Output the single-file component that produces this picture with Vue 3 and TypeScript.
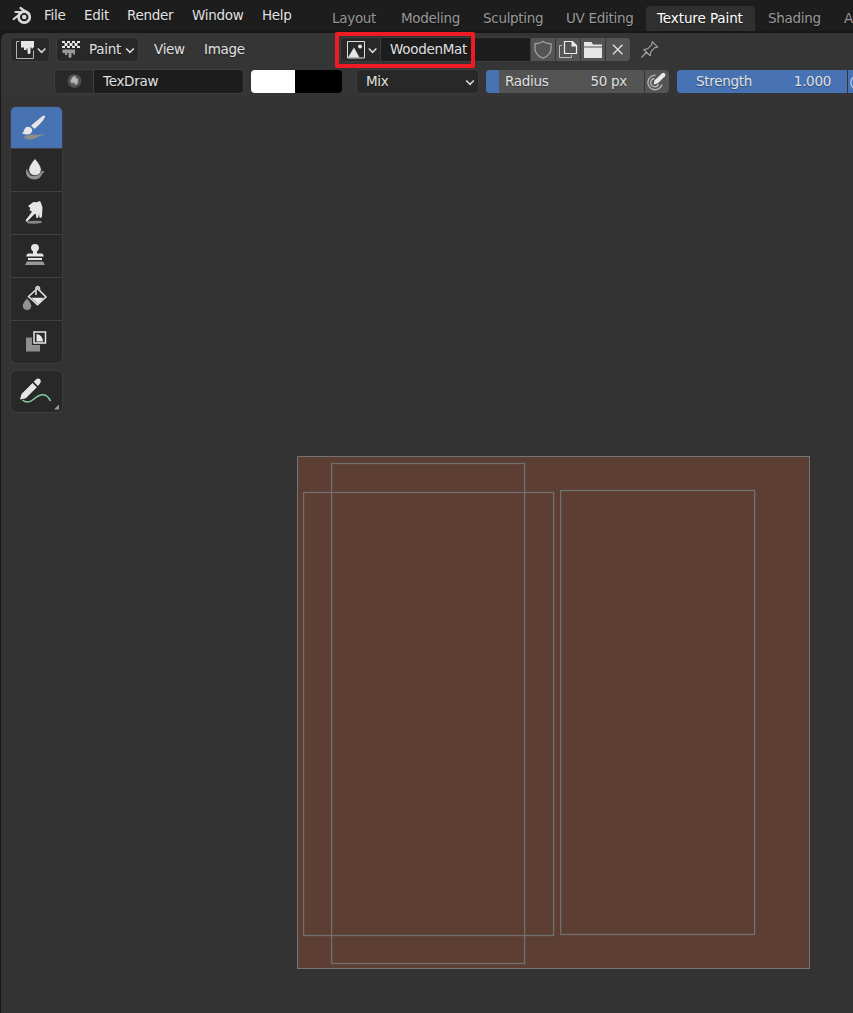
<script setup lang="ts">
interface Label { text: string; width: number }

const menus: Label[] = [
  { text: 'File', width: 40 },
  { text: 'Edit', width: 43 },
  { text: 'Render', width: 65 },
  { text: 'Window', width: 70 },
  { text: 'Help', width: 59 },
]
const tabs: Label[] = [
  { text: 'Layout', width: 69 },
  { text: 'Modeling', width: 82 },
  { text: 'Sculpting', width: 83 },
  { text: 'UV Editing', width: 91 },
  { text: 'Texture Paint', width: 111 },
  { text: 'Shading', width: 76 },
  { text: 'Animation', width: 95 },
]
const tools: string[] = ['draw', 'soften', 'smear', 'clone', 'fill', 'mask']
const px = (n: number) => ({ width: n + 'px' })
</script>

<template>
  <div class="window">
    <header class="topbar">
      <svg class="logo" width="44" height="31" viewBox="0 0 44 31">
        <g fill="none" stroke="#d9d9d9" stroke-linecap="round" stroke-linejoin="round">
          <circle cx="24.2" cy="17" r="5.600" stroke-width="2.700" />
          <path d="M15.500 12h9M20.500 8l8.500 6M13.700 19l9-7" stroke-width="2.200" />
        </g>
        <circle cx="24.200" cy="17" r="2.300" fill="#d9d9d9" />
      </svg>
      <nav class="menus">
        <span v-for="m in menus" :key="m.text" :style="px(m.width)">{{ m.text }}</span>
      </nav>
      <nav class="tabs">
        <span v-for="t in tabs" :key="t.text" class="tab" :style="px(t.width)"><span :class="{ active: t.text === 'Texture Paint' }">{{ t.text }}</span></span>
      </nav>
    </header>

    <main class="editor">
      <div class="row header-row">
        <div class="box editor-type">
          <svg width="38" height="24" viewBox="0 0 38 24">
            <path d="M8.500 4.500h-3v17h17v-8" fill="none" stroke="#b4b4b4" />
            <path d="M10 4h13v6.500h-1v1h-1.500v-1h-1v5q0 1.500-1.500 1.500t-1.500-1.500V11.500h-1V13h-2.500v-2.500H10z" fill="#e6e6e6" />
            <path d="M26.800 11.500l3.800 3.800 3.800-3.800" fill="none" stroke="#d8d8d8" stroke-width="1.600" />
          </svg>
        </div>
        <div class="box mode">
          <svg width="31" height="24" viewBox="0 0 31 24">
            <path d="M5 4h3v2H5zm5 0h3v2h-3zm5 0h3v2h-3zm5 0h3v2h-3zM7.500 6h3v3h-3zm5 0h3v3h-3zm5 0h3v3h-3zM5 9h3v2H5zm5 0h3v2h-3zm5 0h3v2h-3zm5 0h3v2h-3z" fill="#e6e6e6" />
            <path d="M5.500 12.500h12.500v5h-2v-1.500h-1.500V20q-1.500 2-3 0v-4h-1.500v2h-2v-2h-2.500z" fill="#999" />
          </svg>
          <span class="mode-name">Paint</span>
          <svg width="16" height="24" viewBox="0 0 16 24"><path d="M4.200 11.500l3.800 3.800 3.800-3.800" fill="none" stroke="#d8d8d8" stroke-width="1.600" /></svg>
        </div>
        <span class="view">View</span>
        <span class="image">Image</span>
        <div class="image-select">
          <div class="box browse">
            <svg width="39" height="24" viewBox="0 0 39 24">
              <path d="M6.500 4.500h17v16.500h-17z" fill="none" stroke="#dedede" />
              <path d="M7 20.500L13 10.500l5.500 10z" fill="#e6e6e6" /><circle cx="19" cy="9.500" r="2" fill="#e6e6e6" />
              <path d="M27.800 11.500l3.800 3.800 3.800-3.800" fill="none" stroke="#d8d8d8" stroke-width="1.600" />
            </svg>
          </div>
          <div class="field image-name">WoodenMat</div>
          <div class="button"><svg width="24" height="24" viewBox="0 0 24 24"><path d="M12 4.500l3 1.500 5 .8v5q0 6-8 9.500-8-3.500-8-9.500v-5L9 6z" fill="none" stroke="#a6a6a6" stroke-width="1.200" /></svg></div>
          <div class="button"><svg width="24" height="24" viewBox="0 0 24 24"><path d="M6 8.500H3.500v12h12V18" fill="none" stroke="#bcbcbc" /><path d="M8.500 4.500h8l4 4v8h-12z" fill="none" stroke="#ededed" stroke-width="1.200" /><path d="M15.500 4v5.500H21z" fill="#eee" /></svg></div>
          <div class="button"><svg width="24" height="24" viewBox="0 0 24 24"><path d="M3 5h7.500L12 7.500h9v2H3zM3 10.500h18V21H3z" fill="#e6e6e6" /></svg></div>
          <div class="button last"><svg width="24" height="24" viewBox="0 0 24 24"><path d="M7 7.700l9.500 9.500M16.500 7.700L7 17.200" stroke="#dedede" stroke-width="1.400" /></svg></div>
        </div>
        <svg class="pin" width="20" height="24" viewBox="0 0 20 24">
          <path d="M.500 20.500l5.500-6M2.800 12.500l6.400 6.200.8-4.200 3.700-3.800 3-.5-5.500-5.500-.6 3.200-3.700 3.700z" fill="none" stroke="#9d9d9d" stroke-width="1.200" stroke-linejoin="round" />
        </svg>
      </div>

      <div class="row settings-row">
        <div class="brush">
          <div class="box brush-icon">
            <svg width="38" height="24" viewBox="0 0 38 24">
              <defs><radialGradient id="ball"><stop offset="0" stop-color="#808080" /><stop offset=".7" stop-color="#555" /><stop offset="1" stop-color="#484848" /></radialGradient></defs>
              <circle cx="19.500" cy="12" r="7" fill="url(#ball)" />
              <path d="M15.500 11.500l2.500-4 3-.5-.5 2 2.500 1-.3 4.500-2.200 1.500-1.500-2.800-2.500 1z" fill="#c4c4c4" opacity=".85" />
            </svg>
          </div>
          <div class="field brush-name">TexDraw</div>
        </div>
        <div class="colors"><i class="white" /><i class="black" /></div>
        <div class="box blend">
          <span>Mix</span>
          <svg width="16" height="24" viewBox="0 0 16 24"><path d="M4.200 11.500l3.800 3.800 3.800-3.800" fill="none" stroke="#d8d8d8" stroke-width="1.600" /></svg>
        </div>
        <div class="slider radius"><i class="level" /><span>Radius</span><b>50 px</b></div>
        <div class="button pressure">
          <svg width="24" height="24" viewBox="0 0 24 24">
            <path d="M10.500 6.300A7.200 7.200 0 1 0 17 15.500M9.500 9.700A4 4 0 1 0 13.500 15" fill="none" stroke="#b5b5b5" stroke-width="1.400" />
            <path d="M8.500 15.500l1.200-4.300 7.300-7q1.500-1 2.800.300 1.200 1.300.2 2.800l-7.200 7z" fill="#eaeaea" />
          </svg>
        </div>
        <div class="slider strength"><span>Strength</span><b>1.000</b></div>
        <div class="button strength-pressure">
          <svg width="24" height="24" viewBox="0 0 24 24"><path d="M10.500 6.300A7.200 7.200 0 1 0 17 15.500M9.500 9.700A4 4 0 1 0 13.500 15" fill="none" stroke="#b5c0d6" stroke-width="1.400" /></svg>
        </div>
      </div>

      <div class="workspace">
        <aside class="toolbar">
          <div class="tool-group">
            <div v-for="t in tools" :key="t" class="tool" :class="{ selected: t === 'draw' }">
              <svg width="51" height="42" viewBox="0 0 51 42">
                <g v-if="t === 'draw'">
                  <path d="M13 29.800q5-2.600 9.500-2.300 5 1.200 10.500-.7.700 1-3 2-3 1-5 2.200-3.500 2-8.500 1.200-3.500-.7-3.500-2.400z" fill="#8e8e8e" />
                  <path d="M20 18.500L31 9.500q3-2 3 .2Q32 15 23.300 22z" fill="#e6e6e6" />
                  <path d="M11 26.500q1.700-.7 2-3.200 1.500-4.300 5.500-3.300 3.500 1.500 2.500 4.500-2 4.500-10 2z" fill="#e6e6e6" />
                </g>
                <g v-else-if="t === 'soften'">
                  <path d="M15.200 19.500Q18 24 19.500 26.500q4 1.500 8-2.500 2.500-2.500 5.500-2 .2 2-2 3-1.500 5-7 5.600Q15 30 15 23z" fill="#929292" />
                  <path d="M24 9.500q6 7 6.300 11-.3 6-6.300 6t-6.300-6Q18 16.500 24 9.500z" fill="#e6e6e6" stroke="#282828" stroke-width=".7" />
                </g>
                <g v-else-if="t === 'smear'">
                  <path d="M16 29.500q6-1.200 14.500-.5v2q-7 1.300-14.500.3z" fill="#888" />
                  <path d="M17 14l5.500-4 3 .3L29 9l1.200 2.500 1.300 4-.6 9.500-1.500 1-1-.5-.4-3.500-1 4-1.800-.2-.4-4-1.800.7-6.500 6.700-1.800.6.300-2 6-8-2.500-1.700.8-2z" fill="#e6e6e6" />
                </g>
                <g v-else-if="t === 'clone'">
                  <path d="M24 9a4 4 0 0 1 4 4q0 2-2 3.500v2h5q1.700 1 1.700 3H15.300q0-2 1.700-3h5v-2Q20 15 20 13a4 4 0 0 1 4-4z" fill="#e6e6e6" />
                  <path d="M17 23h14v2H17z" fill="#e6e6e6" /><path d="M16 26.500h16l2 3.500H14z" fill="#999" />
                </g>
                <g v-else-if="t === 'fill'">
                  <path d="M16 20.500q4 4.500 4.300 7-.3 4.500-4.300 4.500t-4.300-4.500q.3-2.500 4.300-7z" fill="#929292" />
                  <path d="M17.500 18.500l9-8L35 19l-8.500 7.800z" fill="none" stroke="#e6e6e6" stroke-width="1.500" />
                  <path d="M20.500 19.700h12L27 26z" fill="#e6e6e6" />
                  <path d="M25 17V9.800q1.700-2.300 3.400 0v2.700" fill="none" stroke="#d0d0d0" stroke-width="1.700" />
                </g>
                <g v-else>
                  <path d="M15 16.500h6V24h8v6.500H15z" fill="#8e8e8e" />
                  <path d="M23 11h11.500v11H23z" fill="#292929" stroke="#e6e6e6" stroke-width="1.500" />
                  <path d="M25.500 20.500v-7.400q6 1 6.500 7.400z" fill="#e6e6e6" />
                </g>
              </svg>
            </div>
          </div>
          <div class="annotate">
            <svg width="51" height="42" viewBox="0 0 51 42">
              <path d="M11.500 29C15 32 19 31.500 23 28S31 22.500 35 24.500Q38.500 27 39.500 30" fill="none" stroke="#82d0a2" stroke-width="1.500" />
              <path d="M9 28.500l1.500-5.500L21.500 12l4.300 4.300-11 10.900zM22.700 10.800l2.800-2.800q2-1.200 3.500.3 1.700 1.700.3 3.700L27 15z" fill="#e6e6e6" />
              <path d="M48 33.500v5h-5z" fill="#9a9a9a" />
            </svg>
          </div>
        </aside>
        <svg class="canvas" width="513" height="513" viewBox="0 0 513 513">
          <rect x=".5" y=".5" width="512" height="512" fill="#5c3e32" stroke="#747474" />
          <g fill="none" stroke="#707070" stroke-width="1.300">
            <rect x="34.600" y="7.500" width="193" height="500" />
            <rect x="6.600" y="36.500" width="250" height="443" />
            <rect x="263.600" y="34.500" width="194" height="444" />
          </g>
        </svg>
      </div>
    </main>

    <div class="highlight" />
  </div>
</template>

<style>
body { background: #1a1a1a; overflow: hidden; }
</style>

<style scoped>
* { box-sizing: border-box; }
.window {
  position: relative; width: 853px; height: 1013px; overflow: hidden; background: #181818;
  color: #e0e0e0; font: 13.5px/24px "DejaVu Sans", sans-serif; letter-spacing: -.3px;
  text-shadow: 0 1px 1px rgba(0, 0, 0, .35); white-space: nowrap;
}
svg { display: block; flex: none; }
.topbar { display: flex; height: 31px; background: #1d1d1d; }
.menus { display: flex; flex: none; padding-top: 3px; }
.menus span { flex: none; }
.tabs { display: flex; flex: none; padding-top: 6px; color: #989898; }
.tab { flex: none; height: 25px; padding-left: 11px; }
.active { display: block; width: 109px; height: 25px; margin-left: -11px; padding-left: 11px; border-radius: 4px 4px 0 0; background: #303030; color: #fff; letter-spacing: -.1px; }
.editor { margin: 2px 0 0 1px; height: 980px; background: #333; border-radius: 7px 0 0 0; overflow: hidden; }
.row { display: flex; height: 32px; background: #353535; }
.row svg { margin-top: -1px; }
.header-row { padding: 5px 0 0 10px; line-height: 22px; }
.settings-row { padding: 5px 0 0 54px; line-height: 22px; }
.box { display: flex; flex: none; height: 23px; background: #282828; border-radius: 4px; box-shadow: 0 0 0 1px #3d3d3d; }
.editor-type { width: 38px; }
.mode { width: 81px; margin-left: 8px; }
.mode-name { width: 34px; margin-left: 1px; }
.view { width: 50px; margin-left: 16px; }
.image { width: 137px; }
.image-select { display: flex; gap: 1px; }
.browse { width: 39px; border-radius: 4px 0 0 4px; }
.field { height: 23px; background: #1d1d1d; box-shadow: 0 0 0 1px #3d3d3d; padding-left: 9px; }
.image-name { width: 149px; }
.button { flex: none; width: 24px; height: 23px; background: #545454; overflow: hidden; }
.button.last { border-radius: 0 4px 4px 0; }
.pin { margin-left: 11px; }
.brush { display: flex; flex: none; gap: 1px; }
.brush-icon { width: 38px; border-radius: 4px 0 0 4px; }
.brush-name { width: 149px; border-radius: 0 4px 4px 0; }
.colors { display: flex; flex: none; width: 91px; height: 23px; margin-left: 8px; border-radius: 4px; overflow: hidden; }
.white { width: 44px; background: #fff; }
.black { flex: 1; background: #000; }
.blend { width: 121px; margin-left: 15px; padding-left: 9px; justify-content: space-between; }
.slider { display: flex; flex: none; height: 23px; background: #545454; overflow: hidden; border-radius: 4px 0 0 4px; }
.slider b { font-weight: 400; margin-left: auto; }
.radius { width: 158px; margin-left: 8px; padding-right: 17px; }
.radius .level { width: 13px; background: #4772b3; margin-right: 6px; }
.pressure { margin-left: 1px; border-radius: 0 4px 4px 0; }
.strength { width: 170px; margin-left: 8px; padding: 0 16px 0 19px; background: #4772b3; }
.strength-pressure { margin-left: 1px; background: #4772b3; }
.workspace { display: flex; height: 916px; padding: 10px 0 0 10px; }
.toolbar { width: 51px; }
.tool-group { display: flex; flex-direction: column; gap: 1px; background: #404040; border-radius: 5px; overflow: hidden; box-shadow: 0 0 0 1px #3d3d3d; }
.tool { height: 42px; background: #282828; }
.tool.selected { height: 41px; background: #4772b3; }
.annotate { height: 41px; margin-top: 8px; background: #282828; border-radius: 5px; box-shadow: 0 0 0 1px #3d3d3d; }
.canvas { margin: 349px 0 0 235px; }
.highlight { position: absolute; left: 335px; top: 32px; width: 140px; height: 36px; border: 4px solid #ed1c24; border-radius: 2px; }
</style>
